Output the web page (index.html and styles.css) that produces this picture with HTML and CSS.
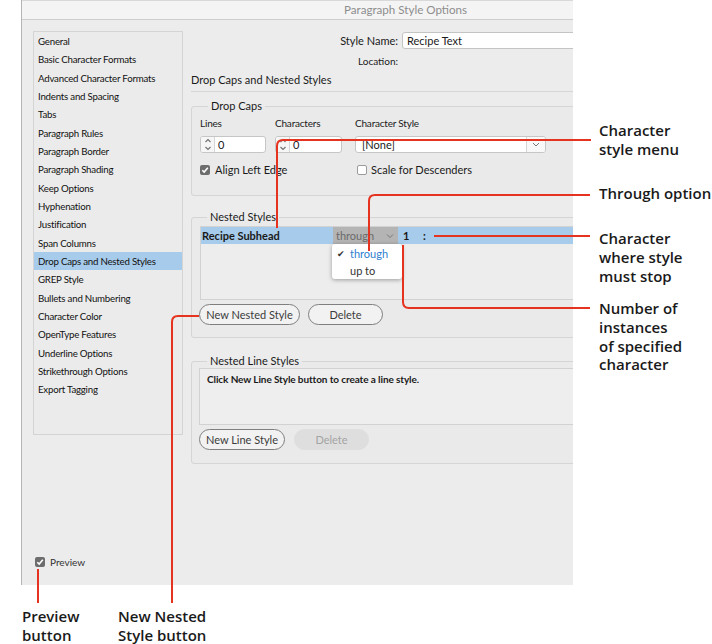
FILE: index.html
```html
<!DOCTYPE html>
<html>
<head>
<meta charset="utf-8">
<title>Paragraph Style Options</title>
<link rel="stylesheet" href="styles.css">
</head>
<body>
<div class="page">
  <div class="window">
    <div class="titlebar">Paragraph Style Options</div>
    <div class="wbody">
      <div class="side">
        <ul class="cats">
          <li>General</li>
          <li>Basic Character Formats</li>
          <li>Advanced Character Formats</li>
          <li>Indents and Spacing</li>
          <li>Tabs</li>
          <li>Paragraph Rules</li>
          <li>Paragraph Border</li>
          <li>Paragraph Shading</li>
          <li>Keep Options</li>
          <li>Hyphenation</li>
          <li>Justification</li>
          <li>Span Columns</li>
          <li class="sel">Drop Caps and Nested Styles</li>
          <li>GREP Style</li>
          <li>Bullets and Numbering</li>
          <li>Character Color</li>
          <li>OpenType Features</li>
          <li>Underline Options</li>
          <li>Strikethrough Options</li>
          <li>Export Tagging</li>
        </ul>
        <div class="preview">
          <span class="cb on"><svg viewBox="0 0 10 10" width="10" height="10"><polyline points="2.3,5.2 4.2,7.1 7.8,2.8" fill="none" stroke="#fff" stroke-width="1.6"/></svg></span>
          <span>Preview</span>
        </div>
      </div>
      <div class="main">
        <div class="namerow">
          <span class="namelbl">Style Name:</span>
          <div class="namefield">Recipe Text</div>
        </div>
        <div class="locrow"><span class="loclbl">Location:</span></div>
        <div class="sechead">Drop Caps and Nested Styles</div>
        <div class="sep"></div>

        <fieldset class="grp dropcaps">
          <legend>Drop Caps</legend>
          <div class="dcrow">
            <div class="fcol c-lines">
              <div class="flbl">Lines</div>
              <div class="spin">
                <span class="arrows"><svg viewBox="0 0 14 15" width="14" height="15"><polyline points="4.5,5 7,2.5 9.5,5" fill="none" stroke="#6f6f6f" stroke-width="1.1"/><polyline points="4.5,10 7,12.5 9.5,10" fill="none" stroke="#6f6f6f" stroke-width="1.1"/></svg></span>
                <span class="val">0</span>
              </div>
            </div>
            <div class="fcol c-chars">
              <div class="flbl">Characters</div>
              <div class="spin">
                <span class="arrows"><svg viewBox="0 0 14 15" width="14" height="15"><polyline points="4.5,5 7,2.5 9.5,5" fill="none" stroke="#6f6f6f" stroke-width="1.1"/><polyline points="4.5,10 7,12.5 9.5,10" fill="none" stroke="#6f6f6f" stroke-width="1.1"/></svg></span>
                <span class="val">0</span>
              </div>
            </div>
            <div class="fcol c-style">
              <div class="flbl">Character Style</div>
              <div class="drop">
                <span class="dval">[None]</span>
                <span class="dbtn"><svg viewBox="0 0 18 15" width="18" height="15"><polyline points="6,6 9,9 12,6" fill="none" stroke="#777" stroke-width="1"/></svg></span>
              </div>
            </div>
          </div>
          <div class="checks">
            <div class="chk c1">
              <span class="cb on"><svg viewBox="0 0 10 10" width="10" height="10"><polyline points="2.3,5.2 4.2,7.1 7.8,2.8" fill="none" stroke="#fff" stroke-width="1.6"/></svg></span>
              <span>Align Left Edge</span>
            </div>
            <div class="chk">
              <span class="cb off"></span>
              <span>Scale for Descenders</span>
            </div>
          </div>
        </fieldset>

        <fieldset class="grp nested">
          <legend>Nested Styles</legend>
          <div class="nlist">
            <div class="nrow">
              <span class="ncell-name">Recipe Subhead</span>
              <span class="ncell-drop">
                <span>through</span>
                <svg viewBox="0 0 10 8" width="10" height="8"><polyline points="2,2.5 5,5.5 8,2.5" fill="none" stroke="#777" stroke-width="1"/></svg>
                <span class="popup">
                  <span class="pitem on"><span class="tick">&#10004;</span>through</span>
                  <span class="pitem">up to</span>
                </span>
              </span>
              <span class="ncell-num">1</span>
              <span class="ncell-chr">:</span>
            </div>
          </div>
          <div class="btns">
            <span class="btn w-nns">New Nested Style</span>
            <span class="btn w-del">Delete</span>
          </div>
        </fieldset>

        <fieldset class="grp lines">
          <legend>Nested Line Styles</legend>
          <div class="lbox">Click New Line Style button to create a line style.</div>
          <div class="btns">
            <span class="btn w-nls">New Line Style</span>
            <span class="btn w-del dis">Delete</span>
          </div>
        </fieldset>
      </div>
    </div>
  </div>

  <div class="bnotes">
    <div class="note bn1">Preview<br>button</div>
    <div class="note bn2">New Nested<br>Style button</div>
  </div>

  <svg class="callouts" viewBox="0 0 712 644" width="712" height="644">
    <path d="M277 228 V146 Q277 140 283 140 H591"/>
    <path d="M369 251 V201 Q369 195 375 195 H590"/>
    <path d="M434 236 H590"/>
    <path d="M403 245 V302 Q403 308 409 308 H590"/>
    <path d="M199 316 H178 Q172 316 172 322 V603"/>
    <path d="M38 569 V603"/>
  </svg>
  <div class="note rn r1">Character<br>style menu</div>
  <div class="note rn r2">Through option</div>
  <div class="note rn r3">Character<br>where style<br>must stop</div>
  <div class="note rn r4">Number of<br>instances<br>of specified<br>character</div>
</div>
</body>
</html>
```

FILE: styles.css
```css
* { box-sizing: border-box; }
html, body { margin: 0; padding: 0; background: #fff; }
body { font-family: Lato, "Liberation Sans", sans-serif; color: #1a1a1a; }

.page { position: relative; width: 712px; height: 644px; overflow: hidden; }

.window {
  margin-left: 21px;
  width: 552px;
  height: 585px;
  background: #ececec;
  border-left: 1px solid #b5b5b5;
  overflow: hidden;
  display: flex;
  flex-direction: column;
}
.titlebar {
  flex: none;
  height: 20px;
  background: #f4f4f4;
  border-top: 1px solid #d9d9d9;
  border-bottom: 1px solid #cdcdcd;
  color: #8d8d8d;
  font-size: 11.6px;
  line-height: 17px;
  padding-left: 322px;
  white-space: nowrap;
}
.wbody { flex: 1; display: flex; min-height: 0; }

/* sidebar */
.side {
  flex: none;
  width: 161px;
  padding: 11px 0 17px 11px;
  display: flex;
  flex-direction: column;
}
.cats {
  list-style: none;
  margin: 0;
  padding: 0;
  width: 150px;
  height: 404px;
  border: 1px solid #d4d4d4;
  background: #ebebeb;
}
.cats li {
  height: 18.33px;
  line-height: 18.33px;
  padding-left: 4px;
  font-size: 9.7px;
  letter-spacing: -0.22px;
  color: #111;
  white-space: nowrap;
}
.cats li.sel { background: #a7cbea; }
.preview {
  margin-top: auto;
  height: 12px;
  display: flex;
  align-items: center;
  gap: 5px;
  padding-left: 2px;
  font-size: 10px;
  color: #333;
}

/* checkboxes */
.cb {
  flex: none;
  width: 10px;
  height: 10px;
  border-radius: 2px;
  display: block;
}
.cb svg { display: block; }
.cb.on { background: #6d6d6d; }
.cb.off { background: #fff; border: 1px solid #9c9c9c; }

/* main */
.main { flex: 1; min-width: 0; margin-left: 8px; padding-top: 12px; }
.namerow { display: flex; height: 17px; align-items: center; }
.namelbl { flex: none; width: 208px; text-align: right; font-size: 11px; padding-right: 1px; }
.namefield {
  margin-left: 3px;
  flex: none;
  width: 200px;
  height: 17px;
  background: #fff;
  border: 1px solid #c4c4c4;
  border-radius: 3px;
  font-size: 11px;
  line-height: 15px;
  padding-left: 4px;
}
.locrow { margin-top: 6px; height: 12px; }
.loclbl { display: block; width: 207px; text-align: right; font-size: 10px; line-height: 12px; }
.sechead { margin-top: 6px; font-size: 11px; line-height: 13px; }
.sep { margin-top: 5px; height: 1px; background: #d6d6d6; width: 400px; }

/* group boxes */
.grp {
  margin: 0;
  padding: 0;
  width: 400px;
  min-width: 0;
  border: 1px solid #d5d5d5;
  border-radius: 3px;
  background: #eaeaea;
}
.grp legend {
  font-size: 11px;
  line-height: 12px;
  padding: 0 3px;
  margin-left: 8px;
}
.dropcaps { margin-top: 8px; padding: 5px 0 19px 8px; }
.nested { margin-top: 15px; padding: 3px 0 12px 7px; }
.lines { margin-top: 17px; padding: 1px 0 13px 7px; }

.dcrow { display: flex; }
.fcol { flex: none; }
.c-lines { width: 66px; }
.c-chars { width: 67px; margin-left: 9px; }
.c-style { width: 191px; margin-left: 13px; }
.flbl { font-size: 10px; line-height: 12px; margin-bottom: 7px; white-space: nowrap; letter-spacing: -0.2px; }
.spin, .drop {
  display: flex;
  height: 17px;
  background: #fff;
  border: 1px solid #c6c6c6;
  border-radius: 3px;
  overflow: hidden;
}
.arrows { flex: none; width: 14px; border-right: 1px solid #d6d6d6; background: #f6f6f6; }
.arrows svg, .dbtn svg { display: block; }
.val { font-size: 11px; line-height: 15px; padding-left: 3px; }
.dval { flex: 1; font-size: 11px; line-height: 15px; padding-left: 6px; }
.dbtn { flex: none; width: 19px; border-left: 1px solid #d6d6d6; background: #f8f8f8; }

.checks { display: flex; margin-top: 10px; height: 13px; }
.chk { display: flex; align-items: center; gap: 5px; font-size: 11px; }
.chk.c1 { width: 157px; }
.chk + .chk { gap: 4px; }

/* nested list */
.nlist {
  margin-left: 1px;
  width: 390px;
  height: 74px;
  border: 1px solid #d2d2d2;
  background: #ededed;
}
.nrow {
  display: flex;
  height: 17px;
  align-items: center;
  background: #a7cbea;
  font-size: 11px;
}
.ncell-name { width: 132px; padding-left: 1px; font-weight: bold; }
.ncell-drop {
  position: relative;
  width: 65px;
  height: 17px;
  background: #b4b4b4;
  color: #6a6a6a;
  display: flex;
  align-items: center;
  justify-content: space-between;
  padding: 0 3px 0 3px;
}
.ncell-num { width: 25px; padding-left: 5px; font-weight: bold; }
.ncell-chr { font-weight: bold; }

.popup {
  position: absolute;
  top: 17px;
  left: -1px;
  width: 70px;
  height: 35px;
  background: #fff;
  border-radius: 3px;
  box-shadow: 0 1px 4px rgba(0,0,0,0.35);
  padding-top: 1px;
  display: flex;
  flex-direction: column;
}
.pitem {
  display: block;
  position: relative;
  height: 17px;
  line-height: 17px;
  padding-left: 18px;
  color: #333;
  font-size: 11px;
}
.pitem.on { color: #2d7fd0; }
.tick { position: absolute; left: 5px; top: 0; color: #333; font-size: 9px; }

.btns { display: flex; margin-top: 4px; margin-left: 0; gap: 8px; }
.btn {
  display: block;
  height: 21px;
  border: 1px solid #7f7f7f;
  border-radius: 11px;
  background: #f2f2f2;
  color: #3c3c3c;
  font-size: 11px;
  line-height: 19px;
  text-align: center;
}
.w-nns { width: 101px; }
.w-del { width: 75px; }
.w-nls { width: 86px; }
.lines .btns { gap: 9px; }
.btn.dis { background: #dedede; border-color: #dedede; color: #a4a4a4; }

.lbox {
  width: 390px;
  height: 57px;
  border: 1px solid #d2d2d2;
  background: #eeeeee;
  font-size: 10px;
  font-weight: bold;
  line-height: 12px;
  letter-spacing: -0.1px;
  padding: 4px 0 0 7px;
}

/* annotations */
.note {
  font-family: "Open Sans", "Liberation Sans", sans-serif;
  font-weight: 600;
  font-size: 15px;
  line-height: 18.8px;
  color: #1a1a1a;
  white-space: nowrap;
}
.bnotes { display: flex; margin-top: 22px; padding-left: 22px; }
.bn1 { width: 96px; }
.callouts { position: absolute; left: 0; top: 0; fill: none; stroke: #e5331f; stroke-width: 2; }
.rn { position: absolute; left: 599px; }
.r1 { top: 121px; }
.r2 { top: 184px; }
.r3 { top: 229px; }
.r4 { top: 299px; }
```
